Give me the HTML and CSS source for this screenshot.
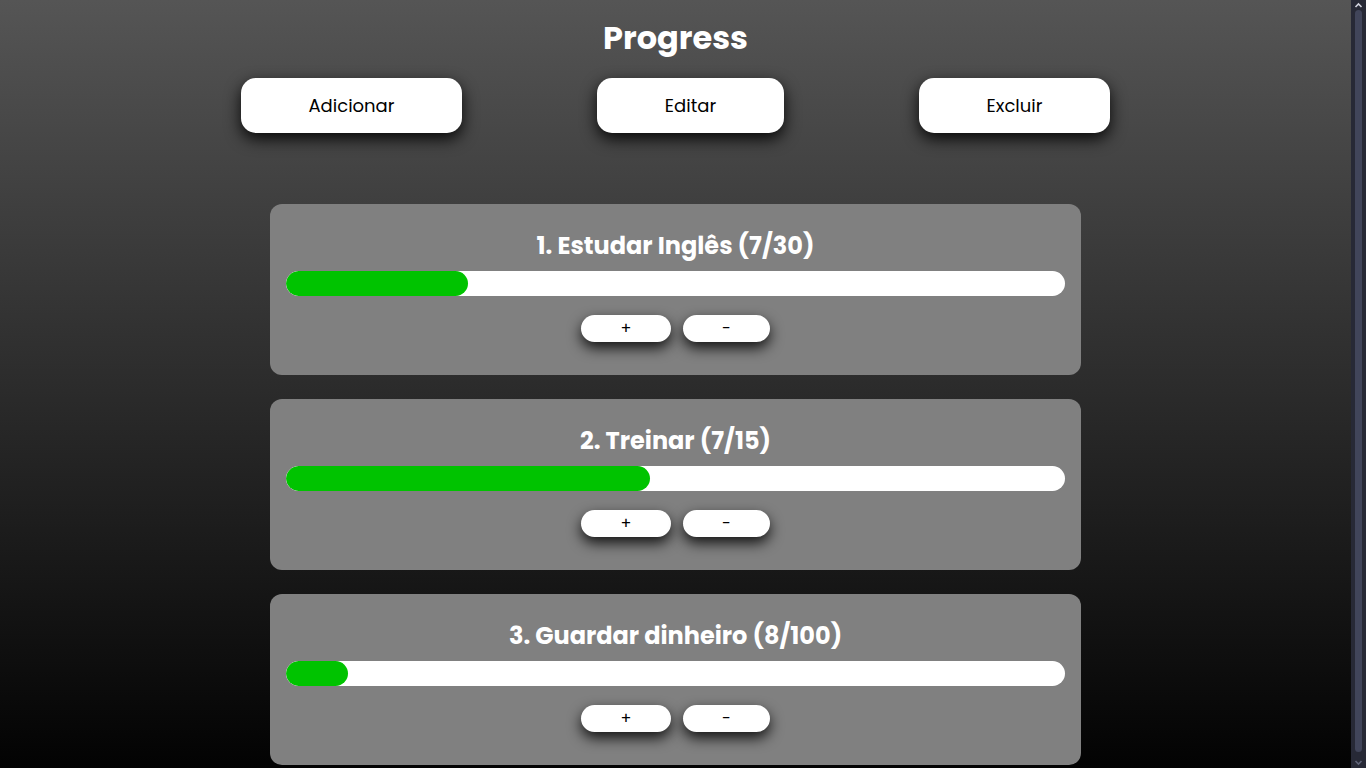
FILE: index.html
```html
<!DOCTYPE html>
<html lang="pt-BR">
<head>
<meta charset="UTF-8">
<title>Progress</title>
<link rel="stylesheet" href="styles.css">
</head>
<body>
<main class="app">
  <h1 class="title">Progress</h1>
  <nav class="actions">
    <button class="action action-add">Adicionar</button>
    <button class="action action-edit">Editar</button>
    <button class="action action-del">Excluir</button>
  </nav>
  <section class="goals">
    <article class="goal">
      <h2 class="goal-title">1. Estudar Inglês (7/30)</h2>
      <div class="track"><div class="fill" style="width: 23.33%"></div></div>
      <div class="steps">
        <button class="step step-plus">+</button>
        <button class="step step-minus">-</button>
      </div>
    </article>
    <article class="goal">
      <h2 class="goal-title">2. Treinar (7/15)</h2>
      <div class="track"><div class="fill" style="width: 46.67%"></div></div>
      <div class="steps">
        <button class="step step-plus">+</button>
        <button class="step step-minus">-</button>
      </div>
    </article>
    <article class="goal">
      <h2 class="goal-title">3. Guardar dinheiro (8/100)</h2>
      <div class="track"><div class="fill" style="width: 8%"></div></div>
      <div class="steps">
        <button class="step step-plus">+</button>
        <button class="step step-minus">-</button>
      </div>
    </article>
  </section>
</main>
<div class="scrollbar" aria-hidden="true">
  <svg class="scroll-arrow" width="15" height="10" viewBox="0 0 15 10"><path d="M4.5 7 L7.5 4 L10.5 7" fill="none" stroke="#d0d2dc" stroke-width="1.6"/></svg>
  <div class="scroll-thumb"></div>
  <svg class="scroll-arrow" width="15" height="10" viewBox="0 0 15 10"><path d="M4.5 4 L7.5 7 L10.5 4" fill="none" stroke="#5f6378" stroke-width="1.6"/></svg>
</div>
</body>
</html>
```

FILE: styles.css
```css
html {
  background: #000;
}
body {
  margin: 0;
  padding-right: 15px;
  min-height: 100vh;
  background: linear-gradient(#555555, #000000);
  font-family: "Poppins", "Inter", "Noto Sans", sans-serif;
  color: #000;
}

.scrollbar {
  position: fixed;
  top: 0;
  right: 0;
  width: 15px;
  height: 100vh;
  background: #272936;
  display: flex;
  flex-direction: column;
  align-items: center;
  padding: 0 0 1px;
  box-sizing: border-box;
}
.scroll-arrow {
  flex: none;
  display: block;
}
.scroll-thumb {
  flex: 1;
  width: 7px;
  margin: 0 0 5px;
  background: #41455a;
  border-radius: 4px;
}

.app {
  display: flex;
  flex-direction: column;
  align-items: center;
  padding: 18px 0 26px;
}
.title {
  margin: 0;
  font-size: 32px;
  line-height: 40px;
  font-weight: 700;
  color: #fff;
}
.actions {
  display: flex;
  justify-content: space-around;
  width: 1004px;
  margin-top: 20px;
}
.action {
  height: 55px;
  border: none;
  border-radius: 15px;
  background: #fff;
  color: #000;
  font-family: inherit;
  font-size: 18px;
  box-shadow: 0 6px 16px rgba(0, 0, 0, 0.9);
  cursor: pointer;
}
.action-add { width: 221px; }
.action-edit { width: 187px; }
.action-del { width: 191px; }

.goals {
  display: flex;
  flex-direction: column;
  gap: 24.5px;
  margin-top: 71px;
}
.goal {
  width: 811px;
  box-sizing: border-box;
  padding: 24px 16px 32.5px;
  background: #808080;
  border-radius: 12px;
  display: flex;
  flex-direction: column;
  align-items: stretch;
}
.goal-title {
  margin: 0 0 7px;
  text-align: center;
  font-size: 24px;
  line-height: 36px;
  font-weight: 700;
  color: #fff;
}
.track {
  height: 25px;
  background: #fff;
  border-radius: 13px;
  overflow: hidden;
}
.fill {
  height: 100%;
  background: #00c300;
  border-radius: 13px;
}
.steps {
  display: flex;
  justify-content: center;
  gap: 12px;
  margin-top: 19px;
}
.step {
  height: 27px;
  border: none;
  border-radius: 14px;
  background: #fff;
  color: #000;
  font-family: inherit;
  font-size: 16px;
  line-height: 27px;
  padding: 0;
  box-shadow: 0 6px 14px rgba(0, 0, 0, 0.85);
  cursor: pointer;
}
.step-plus { width: 90px; }
.step-minus { width: 87px; }
```
